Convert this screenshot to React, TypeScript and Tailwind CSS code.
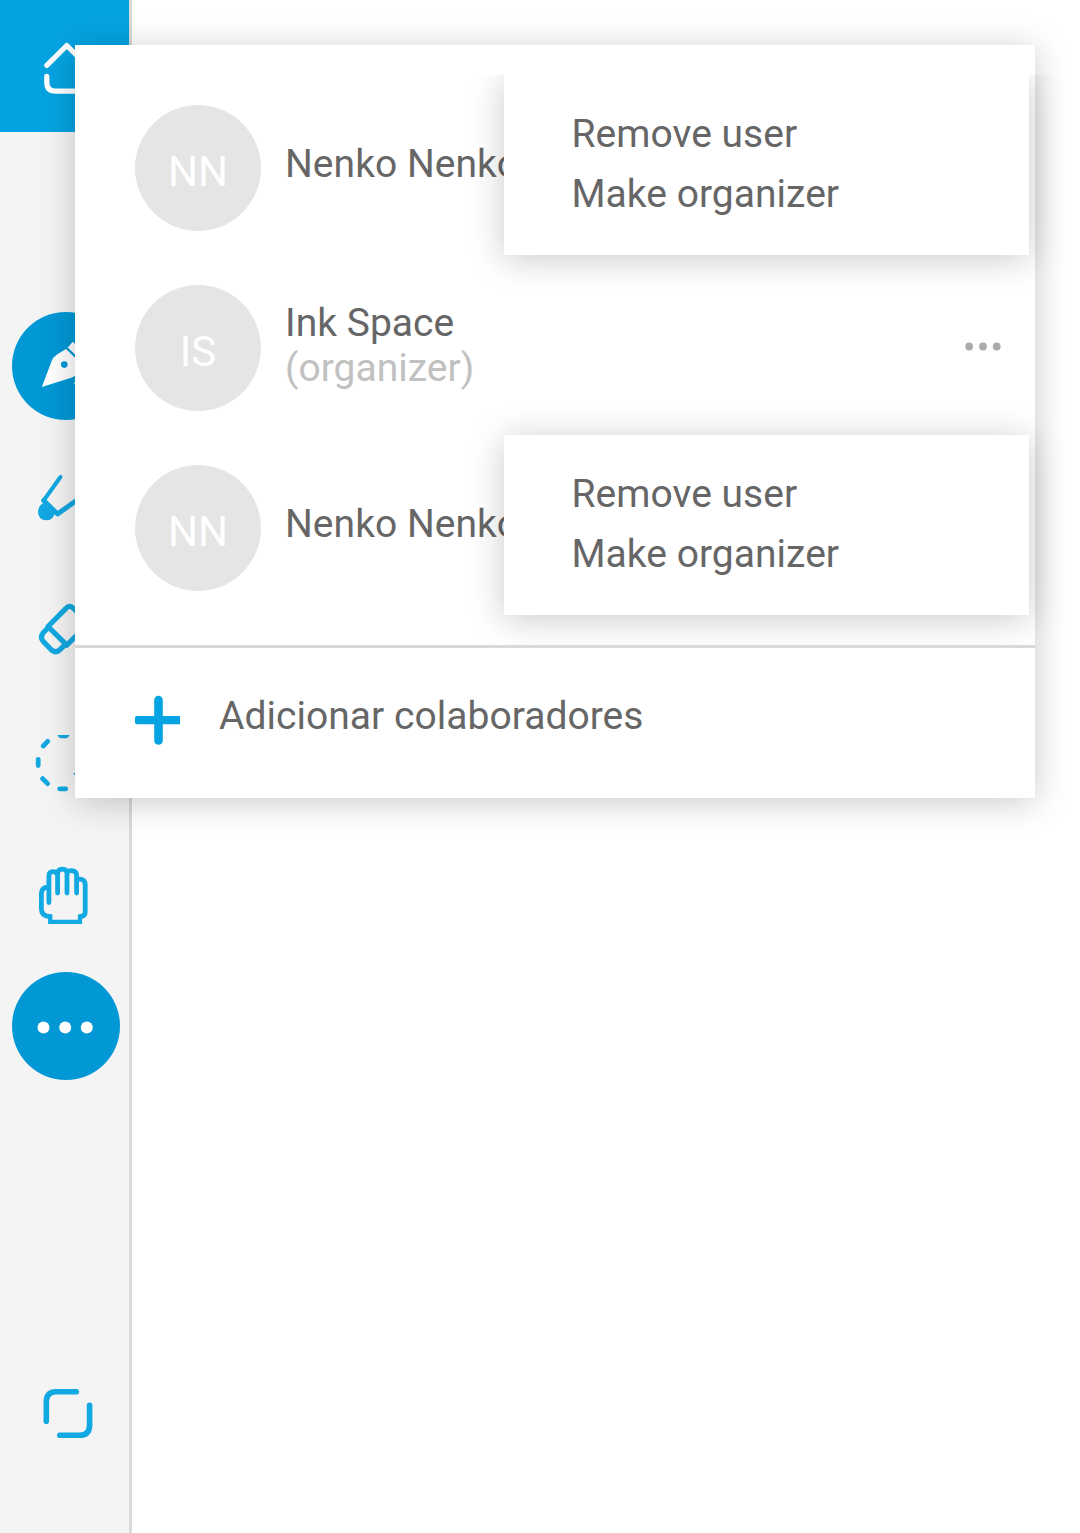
import type { ReactNode } from 'react';

const BLUE = '#12a8e2';

function Tool({ y, label, children }: { y: number; label: string; children: ReactNode }) {
  return (
    <button aria-label={label} className="block h-[132px] w-[132px] shrink-0">
      <svg
        viewBox={`0 ${y} 132 132`}
        width="132"
        height="132"
        fill="none"
        stroke={BLUE}
        strokeWidth="4.8"
        strokeLinecap="round"
        strokeLinejoin="round"
      >
        {children}
      </svg>
    </button>
  );
}

function Sidebar() {
  return (
    <aside className="flex h-full w-[132px] shrink-0 flex-col border-r-[3px] border-[#d9d9d9] bg-[#f4f4f4]">
      <div className="mb-[168px] h-[132px] w-[129px] shrink-0 bg-[#05a3e1]">
        <Tool y={0} label="Home">
          <g stroke="#ffffff" strokeWidth="5.2">
            <path d="M46.8 65.3 66.8 45.5 86.8 65.3" />
            <path d="M46.8 76.3V82.5Q46.8 91.2 55.5 91.2H78.5Q87 91.2 87 82.5V76.3" />
          </g>
        </Tool>
      </div>
      <Tool y={300} label="Pen">
        <circle cx="66" cy="366" r="54" fill="#0298d6" stroke="none" />
        <path d="M41.8 387 51.5 361.5Q53 357 57 354.5L66 349 84 366.5 79.5 372Q77 375.5 72 377.5Z" fill="#fff" stroke="none" />
        <circle cx="64.3" cy="364.6" r="3.3" fill="#0298d6" stroke="none" />
        <path d="M67.8 347.5 72.8 341.8 90 359 85 364.5Z" fill="#fff" stroke="none" />
        <path d="M73.5 383.8 78 379V384Z" fill="#fff" stroke="none" />
      </Tool>
      <Tool y={432} label="Marker">
        <path d="M60.5 477 43.7 500.5" strokeWidth="4" />
        <path d="M43.7 500.5 57.5 514 80 498" strokeWidth="5" />
        <path d="M43.5 503 54.5 514Q52.5 520.3 46.5 520.3 38 520 38 511.5 38.5 505.5 43.5 503Z" fill={BLUE} stroke="none" />
      </Tool>
      <Tool y={564} label="Eraser">
        <g strokeWidth="5.2">
          <path d="M48 626.5 66 608.3Q69.5 604.5 73.5 608.3L85 620Q88 623.5 85 627L66.8 645.2Z" />
          <path d="M48 628 43.3 632.7Q39.5 637.2 43.3 641.5L50.5 649Q55.3 654 59.5 650L65 644.8" />
        </g>
      </Tool>
      <Tool y={696} label="Lasso">
        <path d="M57.5 735H69.5Q68.5 738.2 66.5 738.2H60.5Q58.5 738.2 57.5 735Z" fill={BLUE} stroke="none" />
        <path d="M43.3 746 47.7 741.4M38.2 759.3V765.5M42.6 778.6 47.6 783.6M59.7 788.9H65.7" />
        <path d="M73 773 80 773 77 778Z" fill={BLUE} stroke="none" />
      </Tool>
      <Tool y={828} label="Hand">
        <path
          d="M48.9 902.5V876Q49 871.7 53 871.7 57.6 871.7 57.6 876V893M57.6 876V873.5Q58 869.2 62.4 869.2 67 869.2 67 873.5V893M67 873.5Q67.5 870.7 71.5 870.7 76.6 870.7 76.6 876V893M77 879.2H80Q85.2 879.5 85.2 885V912Q85.2 916 80.8 916.5M48.8 887Q41.4 887.5 41.4 893V909Q41.5 916.5 50 916.5"
        />
        <path d="M50.2 916.5V921.9H80V916.5" strokeLinecap="square" strokeWidth="4.2" strokeLinejoin="miter" />
      </Tool>
      <Tool y={960} label="More">
        <circle cx="66" cy="1026" r="54" fill="#0298d6" stroke="none" />
        <g fill="#fff" stroke="none">
          <circle cx="43.5" cy="1027.5" r="6" />
          <circle cx="65.2" cy="1027.5" r="6" />
          <circle cx="86.8" cy="1027.5" r="6" />
        </g>
      </Tool>
      <div className="mt-[255px]">
        <Tool y={1347} label="Fullscreen">
          <path d="M46.3 1421.3V1401Q46.8 1391.7 56 1391.7H76.3M89.6 1405.3V1426Q89 1435.2 80 1435.2H59.8" strokeWidth="5.6" />
        </Tool>
      </div>
    </aside>
  );
}

function UserMenu() {
  return (
    <div className="absolute top-0 left-[429px] h-[180px] w-[525px] bg-white pt-[29px] pl-[67.5px] leading-[60px] shadow-[0_4px_33px_rgba(0,0,0,0.21)]">
      <div>Remove user</div>
      <div>Make organizer</div>
    </div>
  );
}

type User = { initials: string; name: string; organizer?: boolean };

const users: User[] = [
  { initials: 'NN', name: 'Nenko Nenkov' },
  { initials: 'IS', name: 'Ink Space', organizer: true },
  { initials: 'NN', name: 'Nenko Nenkov' },
];

function UserRow({ user }: { user: User }) {
  return (
    <li className="relative flex h-[180px] items-start pl-[60px]">
      <div className="mt-[30px] flex h-[126px] w-[126px] shrink-0 items-center justify-center rounded-full bg-[#e5e5e5] pt-[7px] text-[42px] text-white">
        {user.initials}
      </div>
      <div className="ml-6 flex h-[180px] grow flex-col justify-center leading-[45px] whitespace-nowrap">
        {user.organizer ? (
          <div className="pt-px">
            <div>{user.name}</div>
            <div className="text-[#c1c1c1]">(organizer)</div>
          </div>
        ) : (
          <div className="pb-0.5">{user.name}</div>
        )}
      </div>
      {user.organizer ? (
        <svg className="mt-[87px] mr-[34px] shrink-0" width="36" height="9" viewBox="0 0 36 9" fill="#aaaaaa">
          <circle cx="4.2" cy="4.5" r="3.9" />
          <circle cx="18" cy="4.5" r="3.9" />
          <circle cx="31.7" cy="4.5" r="3.9" />
        </svg>
      ) : (
        <UserMenu />
      )}
    </li>
  );
}

export default function App() {
  return (
    <div className="relative flex h-[1533px] w-[1080px] overflow-hidden bg-white font-[Roboto,sans-serif] text-[39px] tracking-[0.03px] text-[#666666]">
      <Sidebar />
      <main className="grow bg-white" />
      <section className="absolute top-[45px] left-[75px] flex h-[753px] w-[960px] flex-col bg-white pt-[30px] shadow-[0_4px_33px_rgba(0,0,0,0.21)]">
        <ul className="h-[570px] shrink-0 [clip-path:inset(0_-60px_0_-60px)]">
          {users.map((user, i) => (
            <UserRow key={i} user={user} />
          ))}
        </ul>
        <button className="flex h-[153px] items-center border-t-[3px] border-[#d9d9d9] pb-[14px] pl-[60px] text-left">
          <svg className="mt-[8px] shrink-0" width="45" height="50" viewBox="0 0 45 50" fill="#05a3e1">
            <rect x="0" y="21" width="50" height="8.2" rx="2" />
            <rect x="19.2" y="0.7" width="8.6" height="49" rx="4.3" />
          </svg>
          <span className="ml-[39px]">Adicionar colaboradores</span>
        </button>
      </section>
    </div>
  );
}
